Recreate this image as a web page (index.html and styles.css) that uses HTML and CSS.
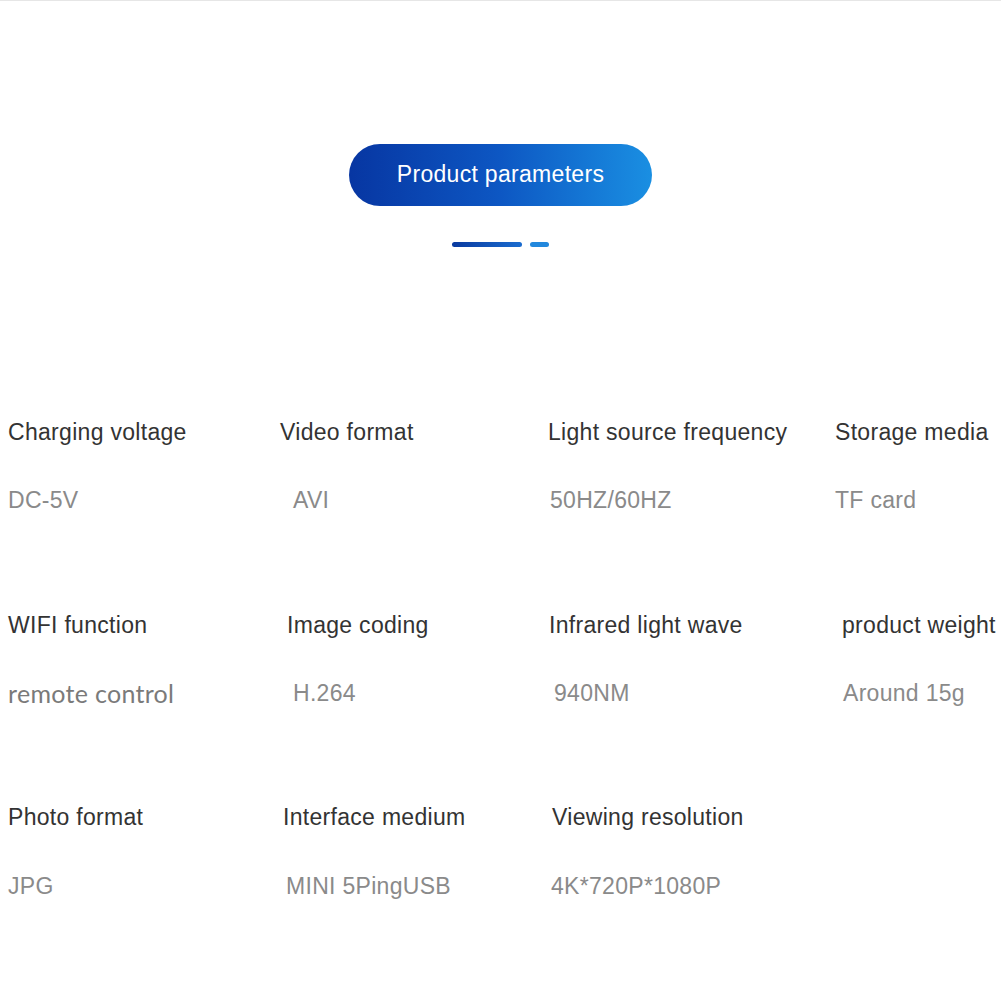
FILE: index.html
```html
<!DOCTYPE html>
<html>
<head>
<meta charset="utf-8">
<link rel="stylesheet" href="styles.css">
</head>
<body>
<div class="page">
  <header class="head">
    <div class="pill">Product parameters</div>
    <div class="bars"><span class="bar long"></span><span class="bar short"></span></div>
  </header>
  <section class="params">
    <div class="row r1">
      <div class="cell"><div class="lbl">Charging voltage</div><div class="val">DC-5V</div></div>
      <div class="cell"><div class="lbl">Video format</div><div class="val in13">AVI</div></div>
      <div class="cell"><div class="lbl">Light source frequency</div><div class="val in2">50HZ/60HZ</div></div>
      <div class="cell"><div class="lbl">Storage media</div><div class="val">TF card</div></div>
    </div>
    <div class="row r2">
      <div class="cell"><div class="lbl">WIFI function</div><div class="val lato">remote control</div></div>
      <div class="cell"><div class="lbl in7">Image coding</div><div class="val in13">H.264</div></div>
      <div class="cell"><div class="lbl in1">Infrared light wave</div><div class="val in6">940NM</div></div>
      <div class="cell"><div class="lbl in7">product weight</div><div class="val in8">Around 15g</div></div>
    </div>
    <div class="row r3">
      <div class="cell"><div class="lbl">Photo format</div><div class="val">JPG</div></div>
      <div class="cell"><div class="lbl in3">Interface medium</div><div class="val in6">MINI 5PingUSB</div></div>
      <div class="cell"><div class="lbl in4">Viewing resolution</div><div class="val in3">4K*720P*1080P</div></div>
      <div class="cell"></div>
    </div>
  </section>
</div>
</body>
</html>
```

FILE: styles.css
```css
html, body {
  margin: 0;
  padding: 0;
  background: #fff;
}
body {
  font-family: "Liberation Sans", Arial, sans-serif;
  width: 1001px;
  height: 1001px;
  overflow: hidden;
}
.page {
  border-top: 1px solid #e6e6e6;
}
.head {
  padding-top: 143px;
  display: flex;
  flex-direction: column;
  align-items: center;
}
.pill {
  width: 303px;
  height: 62px;
  border-radius: 31px;
  background: linear-gradient(90deg, #0736a2 0%, #0d57c3 50%, #1a8fe2 100%);
  color: #fff;
  font-size: 23px;
  letter-spacing: 0.3px;
  display: flex;
  align-items: center;
  justify-content: center;
  padding-bottom: 2px;
  box-sizing: border-box;
}
.bars {
  margin-top: 36px;
  display: flex;
  gap: 8px;
  height: 5px;
}
.bar {
  display: block;
  height: 5px;
  border-radius: 3px;
}
.bar.long {
  width: 70px;
  background: linear-gradient(90deg, #0a3a9f, #1a6ccf);
}
.bar.short {
  width: 19px;
  background: #2288dd;
}
.params {
  padding-left: 8px;
  padding-top: 171px;
}
.row {
  display: grid;
  grid-template-columns: 272px 268px 287px 1fr;
}
.r2 { margin-top: 97px; }
.r3 { margin-top: 96px; }
.cell {
  white-space: nowrap;
}
.lbl, .val {
  font-size: 23px;
  line-height: 28px;
  letter-spacing: 0.3px;
}
.lbl {
  color: #333;
}
.val {
  color: #8a8a8a;
  margin-top: 40px;
}
.r3 .val { margin-top: 41px; }
.val.lato {
  font-family: Lato, "Liberation Sans", sans-serif;
  font-size: 25px;
  color: #7a7a7a;
  letter-spacing: 0.3px;
}
.in1 { padding-left: 1px; }
.in2 { padding-left: 2px; }
.in3 { padding-left: 3px; }
.in4 { padding-left: 4px; }
.in6 { padding-left: 6px; }
.in7 { padding-left: 7px; }
.in8 { padding-left: 8px; }
.in13 { padding-left: 13px; }
```
